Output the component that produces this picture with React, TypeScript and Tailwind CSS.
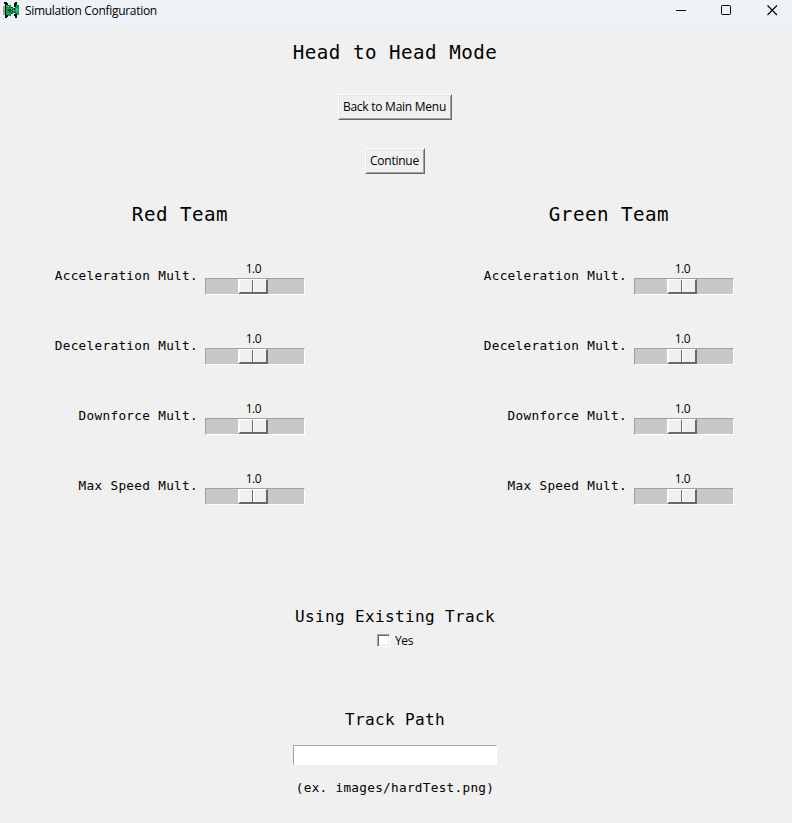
import React from "react";

const mono = "font-['DejaVu_Sans_Mono',monospace] text-black whitespace-nowrap";
const ui = "font-['Open_Sans','Noto_Sans',sans-serif] text-black whitespace-nowrap";

function CarIcon() {
  return (
    <svg width="18" height="18" viewBox="0 0 18 18" shapeRendering="crispEdges" className="shrink-0">
      <path fill="#a99fa0" d="M1 5h2v9H1z" />
      <path fill="#0b9b50" d="M4 4h5v2h2v1h2V4h4v10h-4v-2h-2v1H9v2H4z" />
      <path fill="#25c46f" d="M5 5h2v1H5zM8 7h2v1H8zM14 7h2v4h-2zM5 12h2v1H5zM11 9h2v1h-2z" />
      <path fill="#050b08" d="M3 2h3v2H3zM2 1h3v2H2zM3 14h3v2H3zM3 15h2v2H3zM12 2h2v4h-2zM13 1h2v3h-2zM12 13h3v2h-3zM13 14h2v3h-2zM3 4h1v10H3zM7 8h2v1H7zM6 9h1v1H6zM9 6h1v1H9zM9 12h1v1H9zM12 7h1v2h-1zM12 11h1v1h-1zM10 10h1v1h-1z" />
      <path fill="#20543a" d="M7 9h2v2H7zM10 8h1v1h-1z" />
    </svg>
  );
}

function TitleBar() {
  return (
    <header className="flex h-[26px] items-start bg-[#eef3f8] pl-0.5">
      <div className="mt-px">
        <CarIcon />
      </div>
      <span className={`${ui} ml-[5px] mt-[3px] text-[12px] leading-4 tracking-[-0.31px]`}>
        Simulation Configuration
      </span>
      <div className="ml-auto mt-[5px] flex h-[11px] pr-[14px]">
        <svg width="11" height="11" shapeRendering="crispEdges" className="mr-[34px]">
          <path d="M0 5.5h10" stroke="#000" />
        </svg>
        <svg width="11" height="11" className="mr-[35px]">
          <rect x="0.5" y="0.5" width="9" height="9" rx="0.8" fill="none" stroke="#000" />
        </svg>
        <svg width="11" height="11">
          <path d="M.5 .5l9.5 9.5M10 .5L.5 10" stroke="#000" strokeWidth="1.1" />
        </svg>
      </div>
    </header>
  );
}

function RaisedButton({ children, width }: { children: React.ReactNode; width: string }) {
  return (
    <button
      className={`${ui} ${width} flex h-[26px] items-center justify-center border border-t-white border-l-white border-r-[#696969] border-b-[#696969] bg-[#f0f0f0] pr-px text-[12px] leading-4 tracking-[-0.25px] shadow-[inset_1px_1px_0_#e3e3e3,inset_-1px_-1px_0_#a0a0a0]`}
    >
      {children}
    </button>
  );
}

function Scale() {
  return (
    <div className="w-[100px] shrink-0">
      <div className={`${ui} h-[18px] pr-[3px] text-center text-[12px] leading-[18px] tracking-[-0.4px]`}>1.0</div>
      <div className="h-[17px] border border-t-[#a0a0a0] border-l-[#a0a0a0] border-r-white border-b-white bg-[#c8c8c8] pl-8">
        <div className="flex h-[15px] w-[30px] border-t border-l-2 border-r-2 border-b-2 border-t-white border-l-white border-r-[#696969] border-b-[#696969] bg-[#f0f0f0]">
          <div className="ml-3 w-px bg-[#696969]" />
          <div className="w-px bg-white" />
        </div>
      </div>
    </div>
  );
}

const settings = ["Acceleration Mult.", "Deceleration Mult.", "Downforce Mult.", "Max Speed Mult."];

function Team({ name, className }: { name: string; className: string }) {
  return (
    <section className={className}>
      <h2 className={`${mono} h-6 text-center text-[19.2px] leading-6 tracking-[0.48px]`}>{name}</h2>
      <div className="mt-[33px] flex flex-col gap-[35px]">
        {settings.map((label) => (
          <div key={label} className="flex h-[35px] justify-end">
            <label className={`${mono} mr-[7px] mt-[8px] text-[12.7px] leading-4 tracking-[0.32px]`}>{label}</label>
            <Scale />
          </div>
        ))}
      </div>
    </section>
  );
}

export default function App() {
  return (
    <div className="h-[823px] w-[792px] overflow-hidden bg-[#f0f0f0]">
      <TitleBar />
      <main className="flex flex-col">
        <div className="flex flex-col items-center pr-[2px]">
          <h1 className={`${mono} mt-[15px] text-[19.2px] leading-6 tracking-[0.48px]`}>Head to Head Mode</h1>
          <div className="mt-[29px]">
            <RaisedButton width="w-[114px]">Back to Main Menu</RaisedButton>
          </div>
          <div className="mt-7">
            <RaisedButton width="w-[60px]">Continue</RaisedButton>
          </div>
        </div>
        <div className="mt-[29px] flex">
          <Team name="Red Team" className="ml-[55px] w-[250px]" />
          <Team name="Green Team" className="ml-[179px] w-[250px]" />
        </div>
        <div className="flex flex-col items-center pr-[2px]">
          <h3 className={`${mono} mt-[102px] text-[16px] leading-5 tracking-[0.37px]`}>Using Existing Track</h3>
          <label className={`${ui} mt-[6px] flex h-4 items-start text-[12px] leading-4 tracking-[-0.4px]`}>
            <span className="mr-[5px] mt-px h-[13px] w-[13px] border border-t-[#a0a0a0] border-l-[#a0a0a0] border-r-white border-b-white bg-white shadow-[inset_1px_1px_0_#696969,inset_-1px_-1px_0_#e3e3e3]" />
            Yes
          </label>
          <h3 className={`${mono} mt-[61px] text-[16px] leading-5 tracking-[0.37px]`}>Track Path</h3>
          <input
            aria-label="Track Path"
            className="mt-[15px] h-5 w-[204px] border border-t-[#a0a0a0] border-l-[#a0a0a0] border-r-white border-b-white bg-white outline-none"
          />
          <p className={`${mono} mt-[15px] text-[12.7px] leading-4 tracking-[0.3px]`}>(ex. images/hardTest.png)</p>
        </div>
      </main>
    </div>
  );
}
